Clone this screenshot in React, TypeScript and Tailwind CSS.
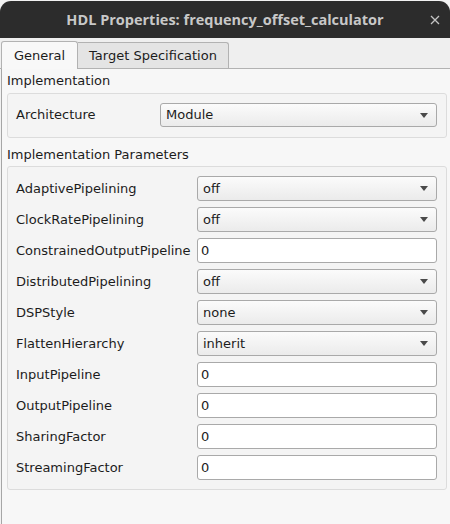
import React from "react";

type Field = { label: string; value: string; kind: "select" | "text" };

const PARAMS: Field[] = [
  { label: "AdaptivePipelining", value: "off", kind: "select" },
  { label: "ClockRatePipelining", value: "off", kind: "select" },
  { label: "ConstrainedOutputPipeline", value: "0", kind: "text" },
  { label: "DistributedPipelining", value: "off", kind: "select" },
  { label: "DSPStyle", value: "none", kind: "select" },
  { label: "FlattenHierarchy", value: "inherit", kind: "select" },
  { label: "InputPipeline", value: "0", kind: "text" },
  { label: "OutputPipeline", value: "0", kind: "text" },
  { label: "SharingFactor", value: "0", kind: "text" },
  { label: "StreamingFactor", value: "0", kind: "text" },
];

function Combo({ value, h = "h-[25px]" }: { value: string; h?: string }) {
  return (
    <div
      className={`${h} flex-1 flex items-center justify-between rounded-[3px] border border-[#a9a9a9] bg-gradient-to-b from-[#fbfbfb] to-[#ebebeb] pl-[5px] pr-[8px]`}
    >
      <span>{value}</span>
      <svg width="8" height="5" viewBox="0 0 8 5">
        <path d="M0 0h8L4 5z" fill="#4a4a4a" />
      </svg>
    </div>
  );
}

function TextBox({ value }: { value: string }) {
  return (
    <div className="h-[25px] flex-1 flex items-center rounded-[3px] border border-[#a9a9a9] bg-white pl-[3px]">
      {value}
    </div>
  );
}

export default function App() {
  return (
    <div
      className="w-[450px] h-[524px] overflow-hidden bg-[#f2f2f2] text-[13px] text-[#1c1c1c]"
      style={{ fontFamily: '"DejaVu Sans", Verdana, sans-serif' }}
    >
      {/* window title */}
      <div className="mt-[1px] h-[37px] rounded-t-[11px] bg-[#2c2c2c] flex items-center relative">
        <div
          className="w-full text-center text-[14.5px] font-bold text-[#c8c8c8] pt-[1px]"
          style={{ fontFamily: '"Open Sans", "Noto Sans", sans-serif' }}
        >
          HDL Properties: frequency_offset_calculator
        </div>
        <div className="absolute right-[10px] top-[14px]">
          <svg width="10" height="10" viewBox="0 0 10 10">
            <path d="M1 1l8 8M9 1l-8 8" stroke="#c4c4c4" strokeWidth="1.3" />
          </svg>
        </div>
      </div>

      {/* tabs */}
      <div className="bg-[#efefef] pt-[3px] flex items-end pl-[1px] border-b border-[#b2b2b2] h-[31px]">
        <div className="h-[28px] w-[77px] rounded-t-[3px] border border-b-0 border-[#b2b2b2] bg-[#f8f8f8] flex items-center justify-center -mb-[1px] relative z-10">
          General
        </div>
        <div className="h-[26px] w-[151px] rounded-tr-[3px] border border-l-0 border-b-0 border-[#b2b2b2] bg-[#e4e4e4] flex items-center justify-center">
          Target Specification
        </div>
      </div>

      {/* pane */}
      <div className="ml-[1px] h-full border-l border-[#a6a6a6] bg-[#f7f7f7] pt-[3px] pl-[5px] pr-[3px]">
        <div className="h-[17px] leading-[17px]">Implementation</div>
        <div className="mt-[4px] rounded-[3px] border border-[#dcdcdc] bg-[#f4f4f4] pl-[8px] pr-[9px] pt-[9px] pb-[10px] flex items-center">
          <div className="w-[144px]">Architecture</div>
          <Combo value="Module" h="h-[24px]" />
        </div>

        <div className="mt-[8px] h-[17px] leading-[17px]">Implementation Parameters</div>
        <div className="mt-[3px] rounded-[3px] border border-[#dcdcdc] bg-[#f4f4f4] pl-[8px] pr-[9px] pt-[9px] pb-[9px] flex flex-col gap-[6px]">
          {PARAMS.map((p) => (
            <div key={p.label} className="flex items-center">
              <div className="w-[181px] whitespace-nowrap">{p.label}</div>
              {p.kind === "select" ? <Combo value={p.value} /> : <TextBox value={p.value} />}
            </div>
          ))}
        </div>
      </div>
    </div>
  );
}
